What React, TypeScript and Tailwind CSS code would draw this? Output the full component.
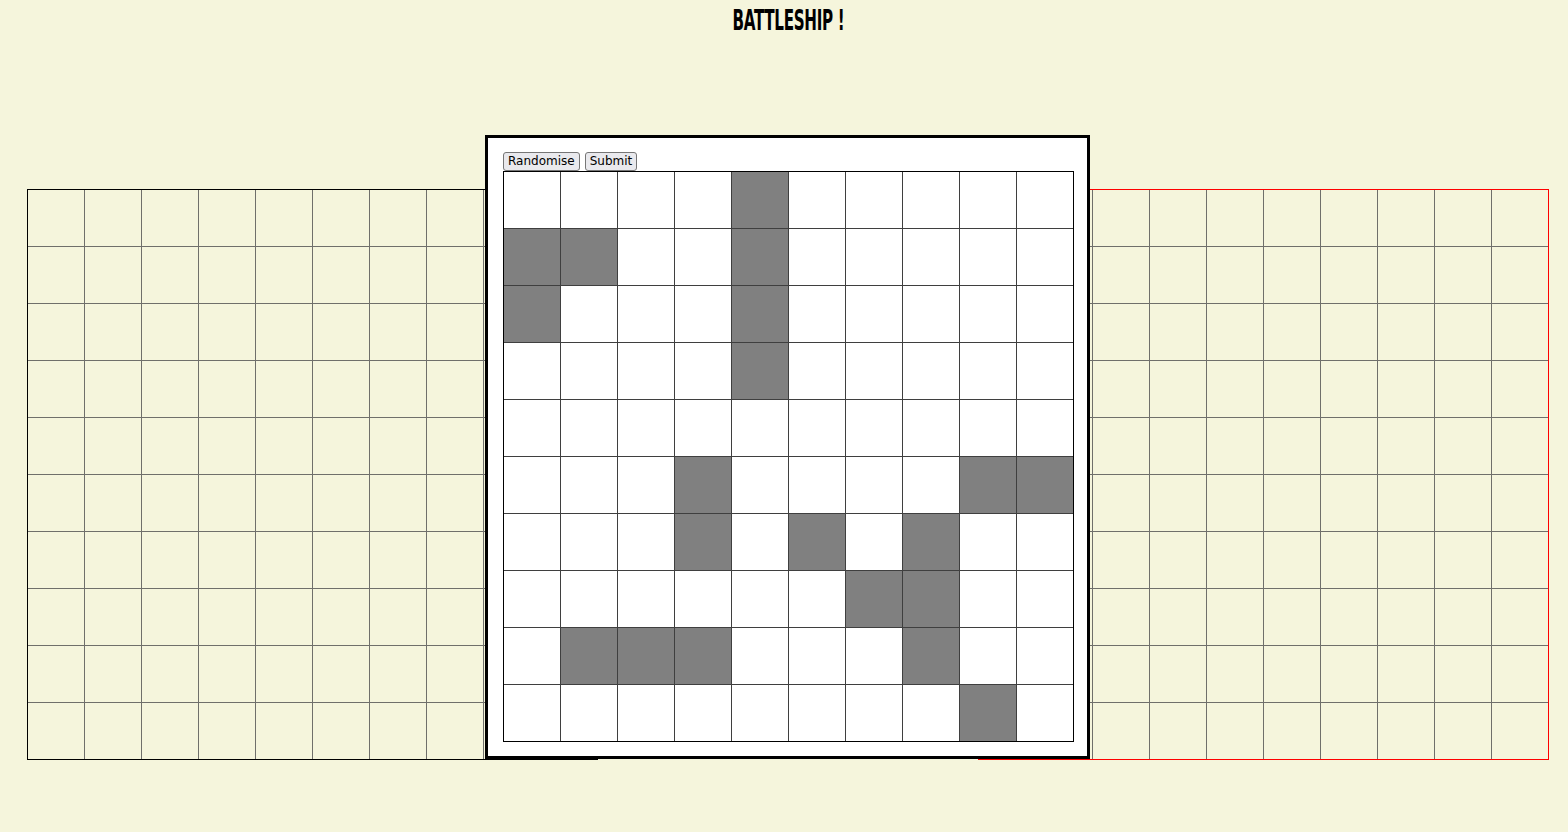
const ships = [
  [4],
  [0, 1, 4],
  [0, 4],
  [4],
  [],
  [3, 8, 9],
  [3, 5, 7],
  [6, 7],
  [1, 2, 3, 7],
  [8],
];

const cells = Array.from({ length: 100 }, (_, i) => i);

function BoardGrid() {
  return (
    <div className="grid w-max grid-cols-[repeat(10,56px)] grid-rows-[repeat(10,56px)] gap-px bg-[#6f6f6a]">
      {cells.map((i) => (
        <div key={i} className="bg-[#f5f5dc]" />
      ))}
    </div>
  );
}

function PlacementGrid() {
  return (
    <div className="grid w-max grid-cols-[repeat(10,56px)] grid-rows-[repeat(10,56px)] gap-px border border-black bg-[#3f3f3f]">
      {cells.map((i) => {
        const row = Math.floor(i / 10);
        const col = i % 10;
        const ship = ships[row].includes(col);
        return <div key={i} className={ship ? "bg-[#808080]" : "bg-white"} />;
      })}
    </div>
  );
}

export default function App() {
  return (
    <div className="relative min-h-screen bg-[#f5f5dc] font-['DejaVu_Sans',sans-serif] text-black">
      <h1 className="flex h-[40px] justify-center pl-2 pt-[3px]">
        <span className="inline-block scale-x-[0.58] font-['DejaVu_Sans_Condensed','DejaVu_Sans',sans-serif] text-[29px] leading-[34px] font-bold tracking-[-0.5px]">
          BATTLESHIP !
        </span>
      </h1>

      <div className="mt-[149px] flex justify-between pr-[19px] pl-[27px]">
        <div className="border border-solid border-black">
          <BoardGrid />
        </div>
        <div className="border border-solid border-[#ff0000]">
          <BoardGrid />
        </div>
      </div>

      <div className="absolute top-[135px] left-[485px] h-[624px] w-[605px] border-[3px] border-black bg-white pt-[14px] pr-[13px] pl-[15px]">
        <div className="flex gap-[5px]">
          <button className="rounded-[3px] border border-[#767676] bg-[#e9e9ed] px-[4px] text-[12px] leading-[17px]">
            Randomise
          </button>
          <button className="rounded-[3px] border border-[#767676] bg-[#e9e9ed] px-[4px] text-[12px] leading-[17px]">
            Submit
          </button>
        </div>
        <PlacementGrid />
      </div>
    </div>
  );
}
